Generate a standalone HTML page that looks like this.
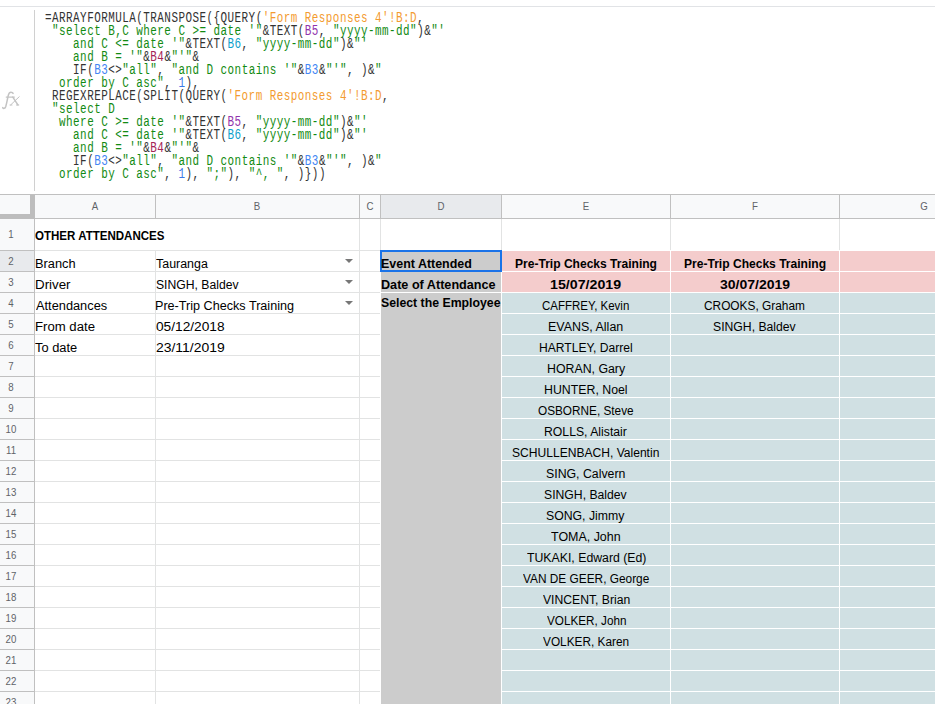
<!DOCTYPE html>
<html><head><meta charset="utf-8"><style>
html,body{margin:0;padding:0}
body{width:935px;height:704px;position:relative;overflow:hidden;background:#fff}
body>div{position:absolute;box-sizing:content-box}
.t{white-space:pre}
.c{text-align:center}
</style></head><body>
<div style="left:0px;top:6px;width:935px;height:1px;background:#e1e3e6;"></div>
<div style="left:34px;top:10px;width:1px;height:181px;background:#d0d0d0;"></div>
<svg style="position:absolute;left:0;top:80px" width="40" height="40" viewBox="0 80 40 40"><g fill="none" stroke="#c3c3c3" stroke-linecap="round"><path d="M2.7 107.6 C3.3 108.7 5.0 108.9 5.8 106.4 C6.6 103.5 7.6 98 8.4 95 C8.9 93 9.9 92.2 11 92.2 C12 92.2 12.8 92.7 13.1 93.4" stroke-width="1.5"/><path d="M6.2 97.1 H14.4" stroke-width="1.1"/><path d="M12.8 97.1 L17.9 104.9" stroke-width="1.5"/><path d="M10.7 104.9 L19.2 96.8" stroke-width="1.0"/><path d="M16.4 105 H18.8 M10 105 H12" stroke-width="1.0"/></g></svg>
<div class="t" style="left:45.3px;top:8px;font-family:'Liberation Mono', monospace;font-size:14px;line-height:20px;letter-spacing:0.6000px;transform:scaleX(0.78);transform-origin:0 0"><span style="color:#333333">=ARRAYFORMULA(TRANSPOSE({QUERY(</span><span style="color:#f39b30">&#x27;Form Responses 4&#x27;!B:D</span><span style="color:#333333">,</span></div>
<div class="t" style="left:45.3px;top:21px;font-family:'Liberation Mono', monospace;font-size:14px;line-height:20px;letter-spacing:0.6000px;transform:scaleX(0.78);transform-origin:0 0"><span style="color:#128a12"> &quot;select B,C where C &gt;= date &#x27;&quot;</span><span style="color:#333333">&amp;TEXT(</span><span style="color:#9234ad">B5</span><span style="color:#333333">, </span><span style="color:#128a12">&quot;yyyy-mm-dd&quot;</span><span style="color:#333333">)&amp;</span><span style="color:#128a12">&quot;&#x27;</span></div>
<div class="t" style="left:45.3px;top:34px;font-family:'Liberation Mono', monospace;font-size:14px;line-height:20px;letter-spacing:0.6000px;transform:scaleX(0.78);transform-origin:0 0"><span style="color:#128a12">    and C &lt;= date &#x27;&quot;</span><span style="color:#333333">&amp;TEXT(</span><span style="color:#0f9fcc">B6</span><span style="color:#333333">, </span><span style="color:#128a12">&quot;yyyy-mm-dd&quot;</span><span style="color:#333333">)&amp;</span><span style="color:#128a12">&quot;&#x27;</span></div>
<div class="t" style="left:45.3px;top:47px;font-family:'Liberation Mono', monospace;font-size:14px;line-height:20px;letter-spacing:0.6000px;transform:scaleX(0.78);transform-origin:0 0"><span style="color:#128a12">    and B = &#x27;&quot;</span><span style="color:#333333">&amp;</span><span style="color:#a52356">B4</span><span style="color:#333333">&amp;</span><span style="color:#128a12">&quot;&#x27;&quot;</span><span style="color:#333333">&amp;</span></div>
<div class="t" style="left:45.3px;top:60px;font-family:'Liberation Mono', monospace;font-size:14px;line-height:20px;letter-spacing:0.6000px;transform:scaleX(0.78);transform-origin:0 0"><span style="color:#333333">    IF(</span><span style="color:#4285f4">B3</span><span style="color:#333333">&lt;&gt;</span><span style="color:#128a12">&quot;all&quot;</span><span style="color:#333333">, </span><span style="color:#128a12">&quot;and D contains &#x27;&quot;</span><span style="color:#333333">&amp;</span><span style="color:#4285f4">B3</span><span style="color:#333333">&amp;</span><span style="color:#128a12">&quot;&#x27;&quot;</span><span style="color:#333333">, )&amp;</span><span style="color:#128a12">&quot;</span></div>
<div class="t" style="left:45.3px;top:73px;font-family:'Liberation Mono', monospace;font-size:14px;line-height:20px;letter-spacing:0.6000px;transform:scaleX(0.78);transform-origin:0 0"><span style="color:#128a12">  order by C asc&quot;</span><span style="color:#333333">, </span><span style="color:#3b78e7">1</span><span style="color:#333333">),</span></div>
<div class="t" style="left:45.3px;top:86px;font-family:'Liberation Mono', monospace;font-size:14px;line-height:20px;letter-spacing:0.6000px;transform:scaleX(0.78);transform-origin:0 0"><span style="color:#333333"> REGEXREPLACE(SPLIT(QUERY(</span><span style="color:#f39b30">&#x27;Form Responses 4&#x27;!B:D</span><span style="color:#333333">,</span></div>
<div class="t" style="left:45.3px;top:99px;font-family:'Liberation Mono', monospace;font-size:14px;line-height:20px;letter-spacing:0.6000px;transform:scaleX(0.78);transform-origin:0 0"><span style="color:#128a12"> &quot;select D</span></div>
<div class="t" style="left:45.3px;top:112px;font-family:'Liberation Mono', monospace;font-size:14px;line-height:20px;letter-spacing:0.6000px;transform:scaleX(0.78);transform-origin:0 0"><span style="color:#128a12">  where C &gt;= date &#x27;&quot;</span><span style="color:#333333">&amp;TEXT(</span><span style="color:#9234ad">B5</span><span style="color:#333333">, </span><span style="color:#128a12">&quot;yyyy-mm-dd&quot;</span><span style="color:#333333">)&amp;</span><span style="color:#128a12">&quot;&#x27;</span></div>
<div class="t" style="left:45.3px;top:125px;font-family:'Liberation Mono', monospace;font-size:14px;line-height:20px;letter-spacing:0.6000px;transform:scaleX(0.78);transform-origin:0 0"><span style="color:#128a12">    and C &lt;= date &#x27;&quot;</span><span style="color:#333333">&amp;TEXT(</span><span style="color:#0f9fcc">B6</span><span style="color:#333333">, </span><span style="color:#128a12">&quot;yyyy-mm-dd&quot;</span><span style="color:#333333">)&amp;</span><span style="color:#128a12">&quot;&#x27;</span></div>
<div class="t" style="left:45.3px;top:138px;font-family:'Liberation Mono', monospace;font-size:14px;line-height:20px;letter-spacing:0.6000px;transform:scaleX(0.78);transform-origin:0 0"><span style="color:#128a12">    and B = &#x27;&quot;</span><span style="color:#333333">&amp;</span><span style="color:#a52356">B4</span><span style="color:#333333">&amp;</span><span style="color:#128a12">&quot;&#x27;&quot;</span><span style="color:#333333">&amp;</span></div>
<div class="t" style="left:45.3px;top:151px;font-family:'Liberation Mono', monospace;font-size:14px;line-height:20px;letter-spacing:0.6000px;transform:scaleX(0.78);transform-origin:0 0"><span style="color:#333333">    IF(</span><span style="color:#4285f4">B3</span><span style="color:#333333">&lt;&gt;</span><span style="color:#128a12">&quot;all&quot;</span><span style="color:#333333">, </span><span style="color:#128a12">&quot;and D contains &#x27;&quot;</span><span style="color:#333333">&amp;</span><span style="color:#4285f4">B3</span><span style="color:#333333">&amp;</span><span style="color:#128a12">&quot;&#x27;&quot;</span><span style="color:#333333">, )&amp;</span><span style="color:#128a12">&quot;</span></div>
<div class="t" style="left:45.3px;top:164px;font-family:'Liberation Mono', monospace;font-size:14px;line-height:20px;letter-spacing:0.6000px;transform:scaleX(0.78);transform-origin:0 0"><span style="color:#128a12">  order by C asc&quot;</span><span style="color:#333333">, </span><span style="color:#3b78e7">1</span><span style="color:#333333">), </span><span style="color:#128a12">&quot;;&quot;</span><span style="color:#333333">), </span><span style="color:#128a12">&quot;^, &quot;</span><span style="color:#333333">, )}))</span></div>
<div style="left:35px;top:250px;width:900px;height:1px;background:#e2e3e3;"></div>
<div style="left:35px;top:271px;width:900px;height:1px;background:#e2e3e3;"></div>
<div style="left:35px;top:292px;width:900px;height:1px;background:#e2e3e3;"></div>
<div style="left:35px;top:313px;width:900px;height:1px;background:#e2e3e3;"></div>
<div style="left:35px;top:334px;width:900px;height:1px;background:#e2e3e3;"></div>
<div style="left:35px;top:355px;width:900px;height:1px;background:#e2e3e3;"></div>
<div style="left:35px;top:376px;width:900px;height:1px;background:#e2e3e3;"></div>
<div style="left:35px;top:397px;width:900px;height:1px;background:#e2e3e3;"></div>
<div style="left:35px;top:418px;width:900px;height:1px;background:#e2e3e3;"></div>
<div style="left:35px;top:439px;width:900px;height:1px;background:#e2e3e3;"></div>
<div style="left:35px;top:460px;width:900px;height:1px;background:#e2e3e3;"></div>
<div style="left:35px;top:481px;width:900px;height:1px;background:#e2e3e3;"></div>
<div style="left:35px;top:502px;width:900px;height:1px;background:#e2e3e3;"></div>
<div style="left:35px;top:523px;width:900px;height:1px;background:#e2e3e3;"></div>
<div style="left:35px;top:544px;width:900px;height:1px;background:#e2e3e3;"></div>
<div style="left:35px;top:565px;width:900px;height:1px;background:#e2e3e3;"></div>
<div style="left:35px;top:586px;width:900px;height:1px;background:#e2e3e3;"></div>
<div style="left:35px;top:607px;width:900px;height:1px;background:#e2e3e3;"></div>
<div style="left:35px;top:628px;width:900px;height:1px;background:#e2e3e3;"></div>
<div style="left:35px;top:649px;width:900px;height:1px;background:#e2e3e3;"></div>
<div style="left:35px;top:670px;width:900px;height:1px;background:#e2e3e3;"></div>
<div style="left:35px;top:691px;width:900px;height:1px;background:#e2e3e3;"></div>
<div style="left:155px;top:251px;width:1px;height:453px;background:#e2e3e3;"></div>
<div style="left:359px;top:219px;width:1px;height:485px;background:#e2e3e3;"></div>
<div style="left:380px;top:219px;width:1px;height:485px;background:#e2e3e3;"></div>
<div style="left:501px;top:219px;width:1px;height:485px;background:#e2e3e3;"></div>
<div style="left:670px;top:219px;width:1px;height:485px;background:#e2e3e3;"></div>
<div style="left:839px;top:219px;width:1px;height:485px;background:#e2e3e3;"></div>
<div style="left:380px;top:250px;width:121px;height:454px;background:#ffffff;"></div>
<div style="left:381px;top:251px;width:120px;height:453px;background:#cccccc;"></div>
<div style="left:380px;top:292px;width:122px;height:1px;background:#ffffff;"></div>
<div style="left:380px;top:271px;width:122px;height:1px;background:#ffffff;"></div>
<div style="left:501px;top:250px;width:434px;height:42px;background:#f4cccc;"></div>
<div style="left:501px;top:292px;width:434px;height:412px;background:#d0e0e3;"></div>
<div style="left:501px;top:271px;width:434px;height:1px;background:#ffffff;"></div>
<div style="left:501px;top:292px;width:434px;height:1px;background:#ffffff;"></div>
<div style="left:501px;top:313px;width:434px;height:1px;background:#ffffff;"></div>
<div style="left:501px;top:334px;width:434px;height:1px;background:#ffffff;"></div>
<div style="left:501px;top:355px;width:434px;height:1px;background:#ffffff;"></div>
<div style="left:501px;top:376px;width:434px;height:1px;background:#ffffff;"></div>
<div style="left:501px;top:397px;width:434px;height:1px;background:#ffffff;"></div>
<div style="left:501px;top:418px;width:434px;height:1px;background:#ffffff;"></div>
<div style="left:501px;top:439px;width:434px;height:1px;background:#ffffff;"></div>
<div style="left:501px;top:460px;width:434px;height:1px;background:#ffffff;"></div>
<div style="left:501px;top:481px;width:434px;height:1px;background:#ffffff;"></div>
<div style="left:501px;top:502px;width:434px;height:1px;background:#ffffff;"></div>
<div style="left:501px;top:523px;width:434px;height:1px;background:#ffffff;"></div>
<div style="left:501px;top:544px;width:434px;height:1px;background:#ffffff;"></div>
<div style="left:501px;top:565px;width:434px;height:1px;background:#ffffff;"></div>
<div style="left:501px;top:586px;width:434px;height:1px;background:#ffffff;"></div>
<div style="left:501px;top:607px;width:434px;height:1px;background:#ffffff;"></div>
<div style="left:501px;top:628px;width:434px;height:1px;background:#ffffff;"></div>
<div style="left:501px;top:649px;width:434px;height:1px;background:#ffffff;"></div>
<div style="left:501px;top:670px;width:434px;height:1px;background:#ffffff;"></div>
<div style="left:501px;top:691px;width:434px;height:1px;background:#ffffff;"></div>
<div style="left:501px;top:250px;width:1px;height:454px;background:#ffffff;"></div>
<div style="left:670px;top:250px;width:1px;height:454px;background:#ffffff;"></div>
<div style="left:839px;top:250px;width:1px;height:454px;background:#ffffff;"></div>
<div style="left:501px;top:250px;width:434px;height:1px;background:#ffffff;"></div>
<div style="left:380px;top:250px;width:118px;height:18px;border:2px solid #1a73e8"></div>
<div style="left:0px;top:194px;width:935px;height:1px;background:#c0c0c0;"></div>
<div style="left:0px;top:195px;width:935px;height:23px;background:#f8f9fa;"></div>
<div style="left:381px;top:195px;width:120px;height:23px;background:#e8eaed;"></div>
<div style="left:0px;top:218px;width:935px;height:1px;background:#c0c0c0;"></div>
<div style="left:155px;top:195px;width:1px;height:23px;background:#c0c0c0;"></div>
<div style="left:359px;top:195px;width:1px;height:23px;background:#c0c0c0;"></div>
<div style="left:380px;top:195px;width:1px;height:23px;background:#c0c0c0;"></div>
<div style="left:501px;top:195px;width:1px;height:23px;background:#c0c0c0;"></div>
<div style="left:670px;top:195px;width:1px;height:23px;background:#c0c0c0;"></div>
<div style="left:839px;top:195px;width:1px;height:23px;background:#c0c0c0;"></div>
<div style="left:0px;top:219px;width:34px;height:485px;background:#f8f9fa;"></div>
<div style="left:0px;top:251px;width:34px;height:20px;background:#e8eaed;"></div>
<div style="left:34px;top:195px;width:1px;height:509px;background:#c0c0c0;"></div>
<div style="left:0px;top:250px;width:34px;height:1px;background:#c0c0c0;"></div>
<div style="left:0px;top:271px;width:34px;height:1px;background:#c0c0c0;"></div>
<div style="left:0px;top:292px;width:34px;height:1px;background:#c0c0c0;"></div>
<div style="left:0px;top:313px;width:34px;height:1px;background:#c0c0c0;"></div>
<div style="left:0px;top:334px;width:34px;height:1px;background:#c0c0c0;"></div>
<div style="left:0px;top:355px;width:34px;height:1px;background:#c0c0c0;"></div>
<div style="left:0px;top:376px;width:34px;height:1px;background:#c0c0c0;"></div>
<div style="left:0px;top:397px;width:34px;height:1px;background:#c0c0c0;"></div>
<div style="left:0px;top:418px;width:34px;height:1px;background:#c0c0c0;"></div>
<div style="left:0px;top:439px;width:34px;height:1px;background:#c0c0c0;"></div>
<div style="left:0px;top:460px;width:34px;height:1px;background:#c0c0c0;"></div>
<div style="left:0px;top:481px;width:34px;height:1px;background:#c0c0c0;"></div>
<div style="left:0px;top:502px;width:34px;height:1px;background:#c0c0c0;"></div>
<div style="left:0px;top:523px;width:34px;height:1px;background:#c0c0c0;"></div>
<div style="left:0px;top:544px;width:34px;height:1px;background:#c0c0c0;"></div>
<div style="left:0px;top:565px;width:34px;height:1px;background:#c0c0c0;"></div>
<div style="left:0px;top:586px;width:34px;height:1px;background:#c0c0c0;"></div>
<div style="left:0px;top:607px;width:34px;height:1px;background:#c0c0c0;"></div>
<div style="left:0px;top:628px;width:34px;height:1px;background:#c0c0c0;"></div>
<div style="left:0px;top:649px;width:34px;height:1px;background:#c0c0c0;"></div>
<div style="left:0px;top:670px;width:34px;height:1px;background:#c0c0c0;"></div>
<div style="left:0px;top:691px;width:34px;height:1px;background:#c0c0c0;"></div>
<div style="left:30px;top:195px;width:5px;height:24px;background:#bdbdbd;"></div>
<div style="left:0px;top:214px;width:35px;height:5px;background:#bdbdbd;"></div>
<div style="left:0px;top:195px;width:30px;height:19px;background:#f8f9fa;"></div>
<div class="t c" style="left:64.5px;width:60px;top:196px;font-family:'Liberation Sans', sans-serif;font-size:11px;line-height:20px;color:#5f6368;transform:scaleX(0.88)">A</div>
<div class="t c" style="left:227.0px;width:60px;top:196px;font-family:'Liberation Sans', sans-serif;font-size:11px;line-height:20px;color:#5f6368;transform:scaleX(0.88)">B</div>
<div class="t c" style="left:339.5px;width:60px;top:196px;font-family:'Liberation Sans', sans-serif;font-size:11px;line-height:20px;color:#5f6368;transform:scaleX(0.88)">C</div>
<div class="t c" style="left:410.5px;width:60px;top:196px;font-family:'Liberation Sans', sans-serif;font-size:11px;line-height:20px;color:#5f6368;transform:scaleX(0.88)">D</div>
<div class="t c" style="left:555.5px;width:60px;top:196px;font-family:'Liberation Sans', sans-serif;font-size:11px;line-height:20px;color:#5f6368;transform:scaleX(0.88)">E</div>
<div class="t c" style="left:724.5px;width:60px;top:196px;font-family:'Liberation Sans', sans-serif;font-size:11px;line-height:20px;color:#5f6368;transform:scaleX(0.88)">F</div>
<div class="t c" style="left:893.5px;width:60px;top:196px;font-family:'Liberation Sans', sans-serif;font-size:11px;line-height:20px;color:#5f6368;transform:scaleX(0.88)">G</div>
<div class="t c" style="left:-19px;width:60px;top:224px;font-family:'Liberation Sans', sans-serif;font-size:11px;line-height:20px;color:#5f6368;transform:scaleX(0.88)">1</div>
<div class="t c" style="left:-19px;width:60px;top:251px;font-family:'Liberation Sans', sans-serif;font-size:11px;line-height:20px;color:#5f6368;transform:scaleX(0.88)">2</div>
<div class="t c" style="left:-19px;width:60px;top:272px;font-family:'Liberation Sans', sans-serif;font-size:11px;line-height:20px;color:#5f6368;transform:scaleX(0.88)">3</div>
<div class="t c" style="left:-19px;width:60px;top:293px;font-family:'Liberation Sans', sans-serif;font-size:11px;line-height:20px;color:#5f6368;transform:scaleX(0.88)">4</div>
<div class="t c" style="left:-19px;width:60px;top:314px;font-family:'Liberation Sans', sans-serif;font-size:11px;line-height:20px;color:#5f6368;transform:scaleX(0.88)">5</div>
<div class="t c" style="left:-19px;width:60px;top:335px;font-family:'Liberation Sans', sans-serif;font-size:11px;line-height:20px;color:#5f6368;transform:scaleX(0.88)">6</div>
<div class="t c" style="left:-19px;width:60px;top:356px;font-family:'Liberation Sans', sans-serif;font-size:11px;line-height:20px;color:#5f6368;transform:scaleX(0.88)">7</div>
<div class="t c" style="left:-19px;width:60px;top:377px;font-family:'Liberation Sans', sans-serif;font-size:11px;line-height:20px;color:#5f6368;transform:scaleX(0.88)">8</div>
<div class="t c" style="left:-19px;width:60px;top:398px;font-family:'Liberation Sans', sans-serif;font-size:11px;line-height:20px;color:#5f6368;transform:scaleX(0.88)">9</div>
<div class="t c" style="left:-19px;width:60px;top:419px;font-family:'Liberation Sans', sans-serif;font-size:11px;line-height:20px;color:#5f6368;transform:scaleX(0.88)">10</div>
<div class="t c" style="left:-19px;width:60px;top:440px;font-family:'Liberation Sans', sans-serif;font-size:11px;line-height:20px;color:#5f6368;transform:scaleX(0.88)">11</div>
<div class="t c" style="left:-19px;width:60px;top:461px;font-family:'Liberation Sans', sans-serif;font-size:11px;line-height:20px;color:#5f6368;transform:scaleX(0.88)">12</div>
<div class="t c" style="left:-19px;width:60px;top:482px;font-family:'Liberation Sans', sans-serif;font-size:11px;line-height:20px;color:#5f6368;transform:scaleX(0.88)">13</div>
<div class="t c" style="left:-19px;width:60px;top:503px;font-family:'Liberation Sans', sans-serif;font-size:11px;line-height:20px;color:#5f6368;transform:scaleX(0.88)">14</div>
<div class="t c" style="left:-19px;width:60px;top:524px;font-family:'Liberation Sans', sans-serif;font-size:11px;line-height:20px;color:#5f6368;transform:scaleX(0.88)">15</div>
<div class="t c" style="left:-19px;width:60px;top:545px;font-family:'Liberation Sans', sans-serif;font-size:11px;line-height:20px;color:#5f6368;transform:scaleX(0.88)">16</div>
<div class="t c" style="left:-19px;width:60px;top:566px;font-family:'Liberation Sans', sans-serif;font-size:11px;line-height:20px;color:#5f6368;transform:scaleX(0.88)">17</div>
<div class="t c" style="left:-19px;width:60px;top:587px;font-family:'Liberation Sans', sans-serif;font-size:11px;line-height:20px;color:#5f6368;transform:scaleX(0.88)">18</div>
<div class="t c" style="left:-19px;width:60px;top:608px;font-family:'Liberation Sans', sans-serif;font-size:11px;line-height:20px;color:#5f6368;transform:scaleX(0.88)">19</div>
<div class="t c" style="left:-19px;width:60px;top:629px;font-family:'Liberation Sans', sans-serif;font-size:11px;line-height:20px;color:#5f6368;transform:scaleX(0.88)">20</div>
<div class="t c" style="left:-19px;width:60px;top:650px;font-family:'Liberation Sans', sans-serif;font-size:11px;line-height:20px;color:#5f6368;transform:scaleX(0.88)">21</div>
<div class="t c" style="left:-19px;width:60px;top:671px;font-family:'Liberation Sans', sans-serif;font-size:11px;line-height:20px;color:#5f6368;transform:scaleX(0.88)">22</div>
<div class="t c" style="left:-19px;width:60px;top:692px;font-family:'Liberation Sans', sans-serif;font-size:11px;line-height:20px;color:#5f6368;transform:scaleX(0.88)">23</div>
<div class="t" style="left:35.14px;top:226px;font-family:'Liberation Sans', sans-serif;font-size:12.5px;font-weight:bold;line-height:20px;color:#000;transform:scaleX(0.9233);transform-origin:0 0">OTHER ATTENDANCES</div>
<div class="t" style="left:34.57px;top:254px;font-family:'Liberation Sans', sans-serif;font-size:12.5px;font-weight:normal;line-height:20px;color:#000;transform:scaleX(1.0263);transform-origin:0 0">Branch</div>
<div class="t" style="left:34.53px;top:275px;font-family:'Liberation Sans', sans-serif;font-size:12.5px;font-weight:normal;line-height:20px;color:#000;transform:scaleX(1.0667);transform-origin:0 0">Driver</div>
<div class="t" style="left:35.60px;top:296px;font-family:'Liberation Sans', sans-serif;font-size:12.5px;font-weight:normal;line-height:20px;color:#000;transform:scaleX(1.0238);transform-origin:0 0">Attendances</div>
<div class="t" style="left:34.55px;top:317px;font-family:'Liberation Sans', sans-serif;font-size:12.5px;font-weight:normal;line-height:20px;color:#000;transform:scaleX(1.0523);transform-origin:0 0">From date</div>
<div class="t" style="left:35.34px;top:338px;font-family:'Liberation Sans', sans-serif;font-size:12.5px;font-weight:normal;line-height:20px;color:#000;transform:scaleX(1.0286);transform-origin:0 0">To date</div>
<div class="t" style="left:156.25px;top:254px;font-family:'Liberation Sans', sans-serif;font-size:12.5px;font-weight:normal;line-height:20px;color:#000;transform:scaleX(0.9942);transform-origin:0 0">Tauranga</div>
<div class="t" style="left:156.01px;top:275px;font-family:'Liberation Sans', sans-serif;font-size:12.5px;font-weight:normal;line-height:20px;color:#000;transform:scaleX(0.9745);transform-origin:0 0">SINGH, Baldev</div>
<div class="t" style="left:155.49px;top:296px;font-family:'Liberation Sans', sans-serif;font-size:12.5px;font-weight:normal;line-height:20px;color:#000;transform:scaleX(1.0088);transform-origin:0 0">Pre-Trip Checks Training</div>
<div class="t" style="left:155.85px;top:317px;font-family:'Liberation Sans', sans-serif;font-size:12.5px;font-weight:normal;line-height:20px;color:#000;transform:scaleX(1.0964);transform-origin:0 0">05/12/2018</div>
<div class="t" style="left:155.84px;top:338px;font-family:'Liberation Sans', sans-serif;font-size:12.5px;font-weight:normal;line-height:20px;color:#000;transform:scaleX(1.1144);transform-origin:0 0">23/11/2019</div>
<div class="t" style="left:380.85px;top:254px;font-family:'Liberation Sans', sans-serif;font-size:12.5px;font-weight:bold;line-height:20px;color:#000;transform:scaleX(0.9961);transform-origin:0 0">Event Attended</div>
<div class="t" style="left:380.84px;top:275px;font-family:'Liberation Sans', sans-serif;font-size:12.5px;font-weight:bold;line-height:20px;color:#000;transform:scaleX(1.0102);transform-origin:0 0">Date of Attendance</div>
<div class="t" style="left:381.35px;top:293px;font-family:'Liberation Sans', sans-serif;font-size:12.5px;font-weight:bold;line-height:20px;color:#000;transform:scaleX(0.9826);transform-origin:0 0">Select the Employee</div>
<div class="t" style="left:515.08px;top:254px;font-family:'Liberation Sans', sans-serif;font-size:12.5px;font-weight:bold;line-height:20px;color:#000;transform:scaleX(0.9640);transform-origin:0 0">Pre-Trip Checks Training</div>
<div class="t" style="left:550.15px;top:275px;font-family:'Liberation Sans', sans-serif;font-size:12.5px;font-weight:bold;line-height:20px;color:#000;transform:scaleX(1.1366);transform-origin:0 0">15/07/2019</div>
<div class="t" style="left:683.88px;top:254px;font-family:'Liberation Sans', sans-serif;font-size:12.5px;font-weight:bold;line-height:20px;color:#000;transform:scaleX(0.9647);transform-origin:0 0">Pre-Trip Checks Training</div>
<div class="t" style="left:720.02px;top:275px;font-family:'Liberation Sans', sans-serif;font-size:12.5px;font-weight:bold;line-height:20px;color:#000;transform:scaleX(1.1210);transform-origin:0 0">30/07/2019</div>
<div class="t" style="left:541.94px;top:296px;font-family:'Liberation Sans', sans-serif;font-size:12.5px;font-weight:normal;line-height:20px;color:#000;transform:scaleX(0.9195);transform-origin:0 0">CAFFREY, Kevin</div>
<div class="t" style="left:548.10px;top:317px;font-family:'Liberation Sans', sans-serif;font-size:12.5px;font-weight:normal;line-height:20px;color:#000;transform:scaleX(0.9966);transform-origin:0 0">EVANS, Allan</div>
<div class="t" style="left:539.03px;top:338px;font-family:'Liberation Sans', sans-serif;font-size:12.5px;font-weight:normal;line-height:20px;color:#000;transform:scaleX(0.9674);transform-origin:0 0">HARTLEY, Darrel</div>
<div class="t" style="left:546.61px;top:359px;font-family:'Liberation Sans', sans-serif;font-size:12.5px;font-weight:normal;line-height:20px;color:#000;transform:scaleX(0.9866);transform-origin:0 0">HORAN, Gary</div>
<div class="t" style="left:544.21px;top:380px;font-family:'Liberation Sans', sans-serif;font-size:12.5px;font-weight:normal;line-height:20px;color:#000;transform:scaleX(0.9867);transform-origin:0 0">HUNTER, Noel</div>
<div class="t" style="left:538.03px;top:401px;font-family:'Liberation Sans', sans-serif;font-size:12.5px;font-weight:normal;line-height:20px;color:#000;transform:scaleX(0.9423);transform-origin:0 0">OSBORNE, Steve</div>
<div class="t" style="left:544.22px;top:422px;font-family:'Liberation Sans', sans-serif;font-size:12.5px;font-weight:normal;line-height:20px;color:#000;transform:scaleX(0.9779);transform-origin:0 0">ROLLS, Alistair</div>
<div class="t" style="left:512.02px;top:443px;font-family:'Liberation Sans', sans-serif;font-size:12.5px;font-weight:normal;line-height:20px;color:#000;transform:scaleX(0.9657);transform-origin:0 0">SCHULLENBACH, Valentin</div>
<div class="t" style="left:546.31px;top:464px;font-family:'Liberation Sans', sans-serif;font-size:12.5px;font-weight:normal;line-height:20px;color:#000;transform:scaleX(0.9849);transform-origin:0 0">SING, Calvern</div>
<div class="t" style="left:544.41px;top:485px;font-family:'Liberation Sans', sans-serif;font-size:12.5px;font-weight:normal;line-height:20px;color:#000;transform:scaleX(0.9757);transform-origin:0 0">SINGH, Baldev</div>
<div class="t" style="left:546.31px;top:506px;font-family:'Liberation Sans', sans-serif;font-size:12.5px;font-weight:normal;line-height:20px;color:#000;transform:scaleX(0.9811);transform-origin:0 0">SONG, Jimmy</div>
<div class="t" style="left:551.35px;top:527px;font-family:'Liberation Sans', sans-serif;font-size:12.5px;font-weight:normal;line-height:20px;color:#000;transform:scaleX(0.9957);transform-origin:0 0">TOMA, John</div>
<div class="t" style="left:526.75px;top:548px;font-family:'Liberation Sans', sans-serif;font-size:12.5px;font-weight:normal;line-height:20px;color:#000;transform:scaleX(0.9826);transform-origin:0 0">TUKAKI, Edward (Ed)</div>
<div class="t" style="left:522.70px;top:569px;font-family:'Liberation Sans', sans-serif;font-size:12.5px;font-weight:normal;line-height:20px;color:#000;transform:scaleX(0.9484);transform-origin:0 0">VAN DE GEER, George</div>
<div class="t" style="left:542.70px;top:590px;font-family:'Liberation Sans', sans-serif;font-size:12.5px;font-weight:normal;line-height:20px;color:#000;transform:scaleX(0.9742);transform-origin:0 0">VINCENT, Brian</div>
<div class="t" style="left:546.80px;top:611px;font-family:'Liberation Sans', sans-serif;font-size:12.5px;font-weight:normal;line-height:20px;color:#000;transform:scaleX(0.9369);transform-origin:0 0">VOLKER, John</div>
<div class="t" style="left:543.30px;top:632px;font-family:'Liberation Sans', sans-serif;font-size:12.5px;font-weight:normal;line-height:20px;color:#000;transform:scaleX(0.9452);transform-origin:0 0">VOLKER, Karen</div>
<div class="t" style="left:704.43px;top:296px;font-family:'Liberation Sans', sans-serif;font-size:12.5px;font-weight:normal;line-height:20px;color:#000;transform:scaleX(0.9495);transform-origin:0 0">CROOKS, Graham</div>
<div class="t" style="left:713.21px;top:317px;font-family:'Liberation Sans', sans-serif;font-size:12.5px;font-weight:normal;line-height:20px;color:#000;transform:scaleX(0.9757);transform-origin:0 0">SINGH, Baldev</div>
<div style="left:345px;top:259px;width:0;height:0;border-left:4px solid transparent;border-right:4px solid transparent;border-top:4px solid #777"></div>
<div style="left:345px;top:280px;width:0;height:0;border-left:4px solid transparent;border-right:4px solid transparent;border-top:4px solid #777"></div>
<div style="left:345px;top:301px;width:0;height:0;border-left:4px solid transparent;border-right:4px solid transparent;border-top:4px solid #777"></div>
</body></html>
